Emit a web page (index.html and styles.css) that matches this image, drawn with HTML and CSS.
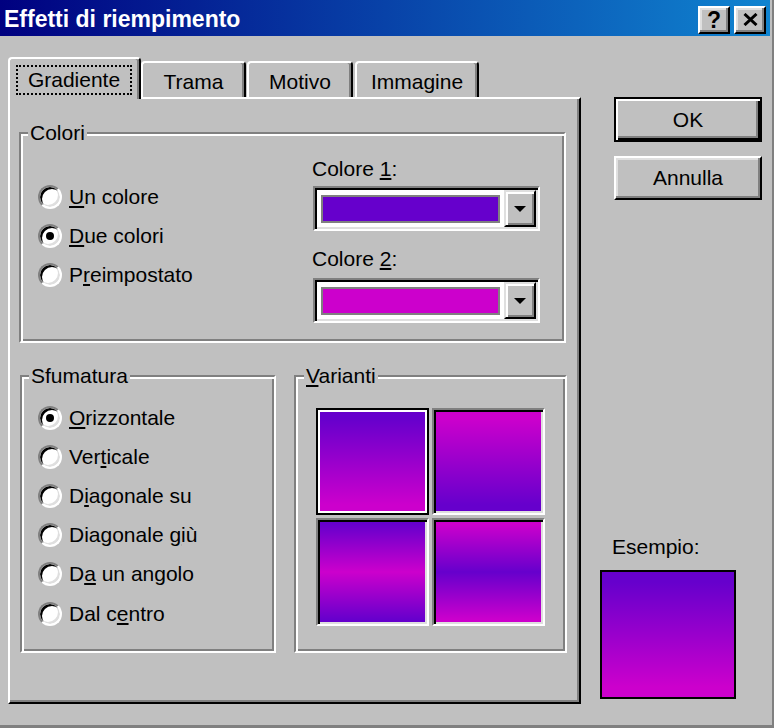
FILE: index.html
```html
<!DOCTYPE html>
<html lang="it">
<head>
<meta charset="utf-8">
<title>Effetti di riempimento</title>
<link rel="stylesheet" href="styles.css">
</head>
<body>
<div class="window">
  <div class="titlebar">
    <span class="title">Effetti di riempimento</span>
    <div class="tb-buttons">
      <div class="tb-btn help">?</div>
      <div class="tb-btn close">
        <svg width="15" height="13" viewBox="0 0 15 13"><path d="M1.5 1 L13.5 12 M13.5 1 L1.5 12" stroke="#000" stroke-width="3" fill="none"/></svg>
      </div>
    </div>
  </div>
  <div class="main">
    <div class="left">
      <div class="tabs">
        <div class="tab active"><span class="focus">Gradiente</span></div>
        <div class="tab t-trama">Trama</div>
        <div class="tab t-motivo">Motivo</div>
        <div class="tab t-immagine">Immagine</div>
      </div>
      <div class="panel">
        <div class="group colori">
          <span class="legend">Colori</span>
          <div class="radios">
            <div class="radio-row"><span class="radio"></span><span><u>U</u>n colore</span></div>
            <div class="radio-row"><span class="radio on"></span><span><u>D</u>ue colori</span></div>
            <div class="radio-row"><span class="radio"></span><span>P<u>r</u>eimpostato</span></div>
          </div>
          <div class="colors">
            <div class="clabel">Colore <u>1</u>:</div>
            <div class="combo c1">
              <span class="swatch purple"></span>
              <span class="drop"><span class="arrow"></span></span>
            </div>
            <div class="clabel second">Colore <u>2</u>:</div>
            <div class="combo c2">
              <span class="swatch magenta"></span>
              <span class="drop"><span class="arrow"></span></span>
            </div>
          </div>
        </div>
        <div class="bottom-row">
          <div class="group sfumatura">
            <span class="legend">Sfumatura</span>
            <div class="radio-list">
              <div class="radio-row r2"><span class="radio on"></span><span><u>O</u>rizzontale</span></div>
              <div class="radio-row r2"><span class="radio"></span><span>Ver<u>t</u>icale</span></div>
              <div class="radio-row r2"><span class="radio"></span><span>D<u>i</u>agonale su</span></div>
              <div class="radio-row r2"><span class="radio"></span><span>Diagonale <u>g</u>iù</span></div>
              <div class="radio-row r2"><span class="radio"></span><span>D<u>a</u> un angolo</span></div>
              <div class="radio-row r2"><span class="radio"></span><span>Dal c<u>e</u>ntro</span></div>
            </div>
          </div>
          <div class="group varianti">
            <span class="legend"><u>V</u>arianti</span>
            <div class="variants">
              <div class="cell selected g1"></div>
              <div class="cell g2"></div>
              <div class="cell g3"></div>
              <div class="cell g4"></div>
            </div>
          </div>
        </div>
      </div>
    </div>
    <div class="right">
      <div class="btn default">OK</div>
      <div class="btn cancel">Annulla</div>
      <div class="esempio-label">Esempio:</div>
      <div class="esempio"></div>
    </div>
  </div>
</div>
</body>
</html>
```

FILE: styles.css
```css
* {
  box-sizing: border-box;
  margin: 0;
  padding: 0;
}

body {
  margin: 0;
  width: 774px;
  height: 728px;
  overflow: hidden;
  background: #c0c0c0;
  font-family: "Liberation Sans", Arial, sans-serif;
  font-size: 21px;
  line-height: 24px;
  color: #000;
}

u {
  text-decoration: underline;
  text-underline-offset: 2px;
  text-decoration-thickness: 2px;
}

.window {
  width: 774px;
  height: 728px;
  border-right: 2px solid #808080;
  border-bottom: 3px solid #808080;
  padding-right: 2px;
  display: flex;
  flex-direction: column;
}

/* Title bar */
.titlebar {
  height: 36px;
  flex: none;
  background: linear-gradient(to right, #000080, #1084d0);
  display: flex;
  justify-content: space-between;
  align-items: flex-start;
  padding: 0 4px;
  color: #fff;
}

.title {
  font-weight: bold;
  font-size: 23px;
  line-height: 36px;
  padding-top: 1px;
}

.tb-buttons {
  display: flex;
  gap: 4px;
  margin-top: 6px;
}

.tb-btn {
  width: 32px;
  height: 28px;
  background: #c0c0c0;
  border: 2px solid;
  border-color: #fff #000 #000 #fff;
  box-shadow: inset -2px -2px #808080, inset 2px 2px #dfdfdf;
  display: flex;
  align-items: center;
  justify-content: center;
  color: #000;
}

.tb-btn.help {
  font-weight: bold;
  font-size: 23px;
  line-height: 24px;
  padding-bottom: 1px;
}

.tb-btn.close svg {
  display: block;
  margin-top: -1px;
}

/* Main area */
.main {
  flex: 1;
  display: flex;
  padding: 21px 0 0 8px;
}

.left {
  width: 573px;
  display: flex;
  flex-direction: column;
}

.tabs {
  height: 40px;
  display: flex;
  align-items: flex-end;
}

.tab {
  height: 36px;
  border-top: 2px solid #fff;
  border-left: 2px solid #fff;
  border-right: 2px solid #000;
  border-radius: 4px 4px 0 0;
  box-shadow: inset -2px 0 #808080;
  text-align: center;
  line-height: 34px;
  padding-top: 2px;
  background: #c0c0c0;
}

.tab.active {
  width: 133px;
  height: 42px;
  margin-bottom: -2px;
  position: relative;
  z-index: 1;
  padding: 6px 0 0 6px;
  text-align: left;
}

.focus {
  display: block;
  width: 116px;
  height: 30px;
  border: 2px dotted #000;
  text-align: center;
  line-height: 26px;
}

.t-trama {
  width: 105px;
}

.t-motivo {
  width: 106px;
  margin-left: 1px;
}

.t-immagine {
  width: 124px;
  margin-left: 2px;
}

.panel {
  height: 607px;
  border: 2px solid;
  border-color: #fff #000 #000 #fff;
  box-shadow: inset -2px -2px #808080;
}

/* Group boxes */
.group {
  position: relative;
  border: 2px solid;
  border-color: #808080 #fff #fff #808080;
  box-shadow: inset 2px 2px #fff, inset -2px -2px #808080;
}

.legend {
  position: absolute;
  top: -13px;
  left: 7px;
  padding: 0 2px;
  background: #c0c0c0;
  line-height: 24px;
}

.colori {
  width: 547px;
  height: 211px;
  margin: 33px 0 0 9px;
  display: flex;
}

.radios {
  width: 291px;
  padding: 43px 0 0 17px;
}

.radio-row {
  height: 39px;
  display: flex;
  align-items: center;
  gap: 7px;
}

.radio-row.r2 {
  height: 39.2px;
}

.radio {
  flex: none;
  width: 24px;
  height: 24px;
  border-radius: 50%;
  border: 2px solid;
  border-color: #808080 #fff #fff #808080;
  box-shadow: inset 2px 2px #000, inset -2px -2px #dfdfdf;
  background: #fff;
  display: flex;
  align-items: center;
  justify-content: center;
}

.radio.on::after {
  content: "";
  width: 8px;
  height: 8px;
  border-radius: 50%;
  background: #000;
}

.colors {
  width: 228px;
  padding-top: 23px;
}

.clabel {
  line-height: 24px;
}

.clabel.second {
  margin-top: 16px;
}

.combo {
  width: 227px;
  height: 45px;
  margin-left: 1px;
  margin-top: 5px;
  border: 2px solid;
  border-color: #808080 #fff #fff #808080;
  box-shadow: inset 2px 2px #000, inset -2px -2px #dfdfdf;
  background: #fff;
  padding: 2px;
  display: flex;
}

.combo.c2 {
  margin-top: 7px;
}

.swatch {
  flex: 1;
  margin: 5px 4px 4px 4px;
  border: 2px solid #808080;
}

.swatch.purple {
  background: #6600cc;
}

.swatch.magenta {
  background: #cc00cc;
}

.drop {
  flex: none;
  width: 32px;
  background: #c0c0c0;
  border: 2px solid;
  border-color: #dfdfdf #000 #000 #dfdfdf;
  box-shadow: inset 2px 2px #fff, inset -2px -2px #808080;
  display: flex;
  align-items: center;
  justify-content: center;
}

.arrow {
  width: 0;
  height: 0;
  border-left: 6px solid transparent;
  border-right: 6px solid transparent;
  border-top: 6px solid #000;
}

.bottom-row {
  display: flex;
  gap: 18px;
  margin: 32px 0 0 10px;
}

.sfumatura {
  width: 256px;
  height: 278px;
}

.sfumatura .legend {
  left: 7px;
}

.radio-list {
  padding: 21px 0 0 16px;
}

.varianti {
  width: 273px;
  height: 278px;
}

.varianti .legend {
  left: 8px;
}

.variants {
  display: grid;
  grid-template-columns: 113px 113px;
  grid-template-rows: 107px 108px;
  gap: 3px;
  padding: 31px 0 0 20px;
}

.cell {
  border: 2px solid;
  border-color: #808080 #fff #fff #808080;
  box-shadow: inset 2px 2px #000, inset -2px -2px #dfdfdf;
  padding: 2px;
  background-clip: content-box;
}

.cell.selected {
  border-color: #000;
  box-shadow: inset 0 0 0 2px #fff;
}

.g1 {
  background-image: linear-gradient(to bottom, #6600cc 8%, #cc00cc 92%);
}

.g2 {
  background-image: linear-gradient(to bottom, #cc00cc 8%, #6600cc 92%);
}

.g3 {
  background-image: linear-gradient(to bottom, #6600cc 4%, #cc00cc 50%, #6600cc 96%);
}

.g4 {
  background-image: linear-gradient(to bottom, #cc00cc 4%, #6600cc 50%, #cc00cc 96%);
}

/* Right column */
.right {
  width: 162px;
  margin-left: 19px;
  padding-top: 40px;
  display: flex;
  flex-direction: column;
}

.btn {
  width: 148px;
  margin-left: 14px;
  background: #c0c0c0;
  border: 2px solid;
  border-color: #fff #000 #000 #fff;
  box-shadow: inset -2px -2px #808080, inset 2px 2px #dfdfdf;
  display: flex;
  align-items: center;
  justify-content: center;
}

.btn.default {
  height: 45px;
  border-color: #000;
  box-shadow: inset 2px 2px #fff, inset -2px -2px #000, inset -4px -4px #808080;
}

.btn.cancel {
  height: 44px;
  margin-top: 14px;
}

.esempio-label {
  margin-top: auto;
  padding-left: 12px;
  line-height: 24px;
  margin-bottom: 11px;
}

.esempio {
  width: 136px;
  height: 129px;
  border: 2px solid #000;
  margin-bottom: 26px;
  background: linear-gradient(to bottom, #6600cc 8%, #cc00cc 92%);
}
```
